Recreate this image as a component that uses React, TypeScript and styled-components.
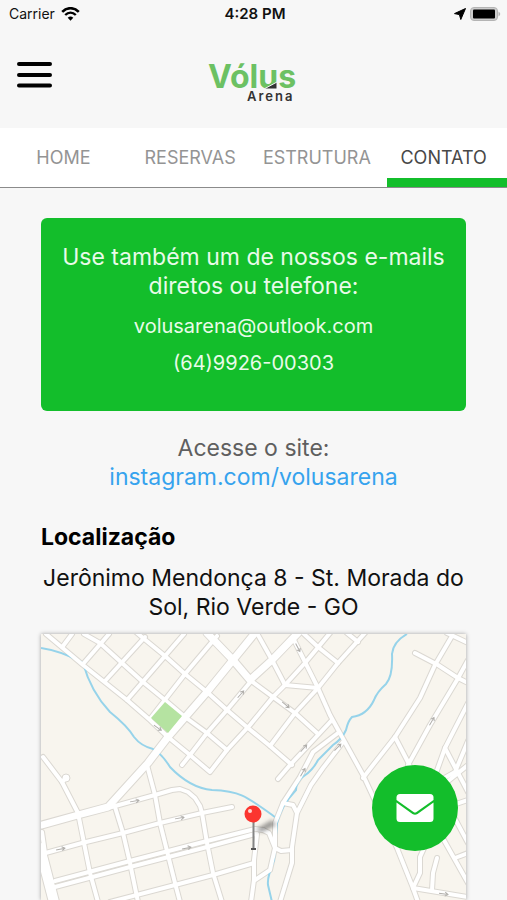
import React from "react";
import styled, { createGlobalStyle } from "styled-components";

const GREEN = "#13be2b";

const GlobalStyle = createGlobalStyle`
  *, *::before, *::after { box-sizing: border-box; }
  body {
    margin: 0;
    background: #f7f7f7;
    color: #111;
    font-family: Inter, "Liberation Sans", sans-serif;
  }
`;

const Screen = styled.div`
  display: flex;
  flex-direction: column;
  height: 100vh;
  overflow: hidden;
`;

const StatusBar = styled.div`
  display: grid;
  grid-template-columns: 1fr auto 1fr;
  align-items: center;
  height: 28px;
  padding: 0 6px 0 9px;
  font-size: 14px;
  line-height: 20px;
`;

const StatusGroup = styled.div<{ $end?: boolean }>`
  display: flex;
  align-items: center;
  gap: ${(p) => (p.$end ? 4 : 6)}px;
  justify-content: ${(p) => (p.$end ? "flex-end" : "flex-start")};
`;

const Clock = styled.time`
  font-size: 15px;
  font-weight: 600;
`;

const Header = styled.header`
  display: grid;
  grid-template-columns: 1fr auto 1fr;
  height: 100px;
  padding: 0 16px;
`;

const MenuButton = styled.button`
  display: flex;
  justify-self: start;
  align-self: start;
  margin-top: 32px;
  padding: 0;
  border: 0;
  background: none;
  cursor: pointer;
`;

const Logo = styled.svg`
  margin-top: 24px;
`;

const Tabs = styled.nav`
  display: grid;
  grid-template-columns: repeat(4, 1fr);
  height: 60px;
  background: #fff;
  border-bottom: 1px solid #8b8b8b;
`;

const Tab = styled.a<{ $active?: boolean }>`
  position: relative;
  display: flex;
  align-items: center;
  justify-content: center;
  color: ${(p) => (p.$active ? "#484848" : "#949494")};
  font-size: 18px;
  line-height: 24px;
  text-decoration: none;

  &::after {
    content: "";
    display: ${(p) => (p.$active ? "block" : "none")};
    position: absolute;
    right: 0;
    bottom: 0;
    left: 7px;
    height: 9px;
    background: ${GREEN};
  }
`;

const Content = styled.main`
  display: flex;
  flex: 1;
  flex-direction: column;
  min-height: 0;
  padding: 30px 41px 0;
`;

const ContactCard = styled.section`
  padding: 25px 16px 34px;
  border-radius: 6px;
  background: ${GREEN};
  color: #e9fbe9;
  text-align: center;
`;

const Lead = styled.p<{ $tone?: string }>`
  margin: 0;
  color: ${(p) => p.$tone || "inherit"};
  font-size: 23px;
  line-height: 29px;
  text-align: center;
`;

const ContactList = styled.address`
  display: flex;
  flex-direction: column;
  gap: 9px;
  margin-top: 11px;
  font-style: normal;
`;

const ContactLink = styled.a`
  color: inherit;
  font-size: 20px;
  line-height: 28px;
  text-decoration: none;
`;

const Site = styled.section`
  padding-top: 23px;
`;

const SiteLink = styled.a`
  color: #36a3ee;
  text-decoration: none;
`;

const Title = styled.h2`
  margin: 30px 0 12px;
  color: #000;
  font-size: 23px;
  font-weight: 700;
  line-height: 30px;
`;

const MapFrame = styled.div`
  flex: 1;
  min-height: 0;
  margin-top: 12px;
  overflow: hidden;
  box-shadow: 0 0 4px rgba(0, 0, 0, 0.35);
  background: #f8f5ee;
`;

const MapDrawing = styled.svg`
  display: block;
  width: 100%;
  height: 100%;
`;

const MailButton = styled.button`
  position: fixed;
  right: 49px;
  bottom: 49px;
  display: flex;
  align-items: center;
  justify-content: center;
  width: 86px;
  height: 86px;
  padding: 0;
  border: 0;
  border-radius: 50%;
  background: ${GREEN};
  cursor: pointer;
`;

const streets: string[] = [
  "46,634 83,665 127,700 150,720 168,737",
  "63,646 72,634",
  "83,664 109,634",
  "105,681 145,637",
  "127,700 165,656 184,634",
  "150,719 185,674 217,636",
  "84,634 100,643 122,663 143,682 165,700 185,717 207,733 227,750",
  "136,632 143,638 165,656 185,674 207,692 227,710 248,728 270,746 292,765",
  "168,737 190,755 210,772 227,750 250,725 273,697 285,685 305,663 330,633",
  "182,765 190,755 207,733 227,710 252,680",
  "258,635 272,660 285,685 318,688",
  "293,638 318,688 330,715 363,775 397,848 413,888 418,902",
  "318,688 338,663 365,633",
  "303,633 318,647 338,663",
  "347,633 358,642",
  "250,680 273,697 295,713 317,733",
  "318,688 295,713 270,746",
  "332,720 290,765 278,779",
  "338,733 313,752 300,777 283,803 275,823 275,848 270,870 255,880",
  "343,742 323,768 311,785 297,813 292,847 292,863 280,902",
  "283,803 293,805 297,813",
  "263,830 269,833 275,848 281,851 292,850",
  "415,653 438,665 458,678 468,683",
  "452,636 435,665 420,698 395,737 373,765 363,778",
  "447,633 468,643",
  "468,660 457,680 430,725 408,765",
  "395,737 408,762 420,790",
  "468,703 445,748 430,790",
  "445,748 468,792",
  "468,741 455,772 430,786",
  "442,786 468,765",
  "445,800 468,843",
  "450,806 468,800",
  "436,826 468,883",
  "455,858 468,853",
  "413,888 420,873 420,857 425,846",
  "432,890 433,873 437,858",
  "413,888 468,897",
  "43,757 62,782 78,813 90,873 98,902",
  "62,782 66,778",
  "115,807 123,833 130,863 138,902",
  "147,765 155,795 160,823 168,855 175,883 180,902",
  "108,808 155,795 172,790 180,789 188,792 195,798 200,806 202,813 207,843 213,873 222,902",
  "42,854 82,843 123,833 160,823 202,813 232,807",
  "55,887 130,867 207,847 255,834",
  "55,881 130,861 207,841 255,829 263,830",
  "110,902 175,885 213,875 254,863",
  "257,834 254,860 254,880 251,902",
  "42,832 45,853",
];

const avenues: string[] = [
  "42,825 78,815 108,807 148,763 168,737 207,692 233,660 255,633",
  "207,633 233,660 250,680 272,660 298,633",
];

const brooks: string[] = [
  "M41 648Q62 651 83 663Q91 692 110 712C120 720 128 727 134 737Q141 746 153 749Q162 754 170 767Q190 788 212 790C240 791 246 796 275 817",
  "M407 634Q393 642 392 654Q393 676 386 684Q377 692 374 700Q367 715 352 717Q348 721 346 730Q342 739 333 745L318 760Q313 770 304 776Q296 781 296 790Q280 807 277 823L274 860Q267 877 268 885L272 902",
];

const arrows: [number, number, number][] = [
  [241, 694, -48],
  [158, 728, 35],
  [298, 648, 62],
  [286, 705, 40],
  [304, 748, -48],
  [338, 747, -45],
  [432, 721, -60],
  [135, 801, -10],
  [180, 818, -10],
  [61, 849, -12],
  [187, 848, -12],
  [303, 772, -60],
  [444, 894, 8],
];

function CityMap() {
  return (
    <MapDrawing viewBox="41 634 425 266" preserveAspectRatio="xMidYMin slice" role="img" aria-label="Mapa">
      <defs>
        <filter id="pin-shadow" x="-50%" y="-50%" width="200%" height="200%">
          <feGaussianBlur stdDeviation="2" />
        </filter>
      </defs>
      <rect x="0" y="600" width="520" height="340" fill="#f8f5ee" />
      <g fill="none" stroke="#dbd8d2" strokeLinejoin="round" strokeLinecap="round">
        {streets.map((p) => <polyline key={p} points={p} strokeWidth="6" />)}
        {avenues.map((p) => <polyline key={p} points={p} strokeWidth="9" />)}
        <polyline points="40,848 54,902" strokeWidth="12" />
      </g>
      <g fill="none" stroke="#96d3ea" strokeWidth="2">
        {brooks.map((d) => <path key={d} d={d} />)}
      </g>
      <circle cx="66" cy="778" r="4" fill="#fff" stroke="#dbd8d2" />
      <g fill="none" stroke="#fff" strokeLinejoin="round" strokeLinecap="round">
        {streets.map((p) => <polyline key={p} points={p} strokeWidth="4" />)}
        {avenues.map((p) => <polyline key={p} points={p} strokeWidth="7" />)}
        <polyline points="40,848 54,902" strokeWidth="10" />
      </g>
      <path d="M165 702L182 716L168 733L151 718Z" fill="#b5e3a1" />
      <g fill="none" stroke="#b0aeaa" strokeWidth="1">
        {arrows.map(([x, y, a]) => (
          <path key={`${x}-${y}`} transform={`translate(${x} ${y}) rotate(${a})`} d="M-5 0H4M1 -2L4 0L1 2" />
        ))}
      </g>
      <path d="M255 830L272 820L276 825L262 832Z" fill="#444" opacity="0.55" filter="url(#pin-shadow)" />
      <path d="M253.500 820V849" stroke="#858585" strokeWidth="2" />
      <path d="M251 849H256" stroke="#555" strokeWidth="2" />
      <circle cx="253" cy="814" r="8.500" fill="#fb352f" />
      <circle cx="250" cy="811" r="2" fill="#ffd7d2" />
    </MapDrawing>
  );
}

export default function App() {
  return (
    <>
      <GlobalStyle />
      <Screen>
        <StatusBar>
          <StatusGroup>
            <span>Carrier</span>
            <svg width="19" height="14" viewBox="0 0 19 14" fill="none" aria-hidden="true">
              <path d="M1.200 4.800C6 0 13 0 17.800 4.800" stroke="#000" strokeWidth="2.600" />
              <path d="M4.200 8C7.300 5 11.700 5 14.800 8" stroke="#000" strokeWidth="2.400" />
              <path d="M6.700 10.700Q9.500 8.300 12.300 10.700L9.500 13.700Z" fill="#000" />
            </svg>
          </StatusGroup>
          <Clock>4:28 PM</Clock>
          <StatusGroup $end>
            <svg width="12" height="12" viewBox="0 0 12 12" aria-hidden="true">
              <path d="M11.500 .5L0.500 5.600L5.400 6.600L6.800 11.500Z" fill="#000" stroke="#000" strokeLinejoin="round" />
            </svg>
            <svg width="31" height="14" viewBox="0 0 31 14" aria-hidden="true">
              <rect x="0.500" y="0.500" width="27" height="13" rx="3.500" fill="#ccc" stroke="#b4b4b4" />
              <rect x="3" y="2.500" width="22" height="9" rx="1" fill="#000" />
              <path d="M28.500 4.500Q32 7 28.500 9.500Z" fill="#b4b4b4" />
            </svg>
          </StatusGroup>
        </StatusBar>

        <Header>
          <MenuButton type="button" aria-label="Menu">
            <svg width="37" height="30" viewBox="0 0 37 30" stroke="#000" strokeWidth="4" strokeLinecap="round">
              <path d="M3 4H34M3 15H34M3 25.500H34" />
            </svg>
          </MenuButton>
          <Logo width="92" height="54" viewBox="0 0 92 54" role="img" aria-label="Vólus Arena">
            <text x="0" y="36" fill="#6cc163" fontFamily="Inter" fontWeight="700" fontSize="32">Vólus</text>
            <path d="M56 37L69 30V37Z" fill="#333" stroke="#f7f7f7" strokeWidth="1" />
            <text x="39" y="49" fill="#333" fontFamily="Inter" fontWeight="600" fontSize="13" letterSpacing="2">Arena</text>
          </Logo>
        </Header>

        <Tabs>
          <Tab href="#home">HOME</Tab>
          <Tab href="#reservas">RESERVAS</Tab>
          <Tab href="#estrutura">ESTRUTURA</Tab>
          <Tab href="#contato" $active aria-current="page">CONTATO</Tab>
        </Tabs>

        <Content>
          <ContactCard>
            <Lead>Use também um de nossos e-mails diretos ou telefone:</Lead>
            <ContactList>
              <ContactLink href="mailto:volusarena@outlook.com">volusarena@outlook.com</ContactLink>
              <ContactLink href="tel:64992600303">(64)9926-00303</ContactLink>
            </ContactList>
          </ContactCard>
          <Site>
            <Lead $tone="#5f5f5f">
              Acesse o site:
              <br />
              <SiteLink href="#instagram">instagram.com/volusarena</SiteLink>
            </Lead>
          </Site>
          <Title>Localização</Title>
          <Lead>Jerônimo Mendonça 8 - St. Morada do Sol, Rio Verde - GO</Lead>
          <MapFrame>
            <CityMap />
          </MapFrame>
        </Content>

        <MailButton type="button" aria-label="Enviar e-mail">
          <svg width="38" height="30" viewBox="0 0 38 30" aria-hidden="true">
            <path d="M4 1H34Q37.500 1 37.500 4.500V7L20.500 19Q19 20 17.500 19L.5 7V4.500Q.5 1 4 1Z" fill="#fff" />
            <path d="M.5 9.500L16.500 21Q19 22.500 21.500 21L37.500 9.500V25.500Q37.500 29 34 29H4Q.5 29 .5 25.500Z" fill="#fff" />
          </svg>
        </MailButton>
      </Screen>
    </>
  );
}
